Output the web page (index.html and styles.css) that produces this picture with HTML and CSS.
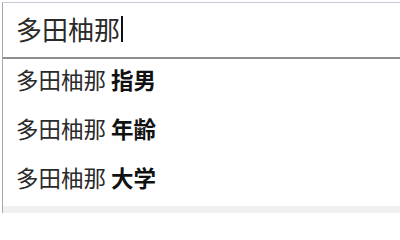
FILE: index.html
```html
<!DOCTYPE html>
<html lang="ja">
<head>
<meta charset="utf-8">
<link rel="stylesheet" href="styles.css">
</head>
<body>
<div class="combo">
  <div class="field"><span class="value">多田柚那</span><span class="caret"></span></div>
  <ul class="list">
    <li class="item">多田柚那 <b>指男</b></li>
    <li class="item">多田柚那 <b>年齢</b></li>
    <li class="item">多田柚那 <b>大学</b></li>
    <li class="item active"></li>
  </ul>
</div>
</body>
</html>
```
FILE: styles.css
```css
html, body {
  margin: 0;
  padding: 0;
  background: #ffffff;
  overflow: hidden;
  width: 400px;
  height: 213px;
}
.combo {
  margin: 2px 0 0 2px;
  width: 398px;
  font-family: "Noto Sans CJK JP", "Noto Sans", sans-serif;
}
.field {
  box-sizing: border-box;
  height: 57px;
  border-top: 1px solid #c6cad6;
  border-left: 1px solid #a8a8a8;
  border-bottom: 2px solid #8e8e8e;
  display: flex;
  align-items: center;
  padding-left: 13px;
  padding-bottom: 3px;
  font-size: 26px;
  color: #2a2a2a;
  line-height: 1;
}
.value {
  display: block;
}
.caret {
  display: block;
  width: 2px;
  height: 26px;
  margin-left: 1px;
  background: #111111;
}
.list {
  list-style: none;
  margin: 0;
  padding: 0;
  border-left: 1px solid #a8a8a8;
}
.item {
  box-sizing: border-box;
  height: 49px;
  display: flex;
  align-items: center;
  padding-left: 13px;
  padding-bottom: 8px;
  font-size: 22.5px;
  line-height: 1;
  color: #2a2a2a;
  white-space: pre;
}
.item b {
  font-weight: 700;
  color: #111111;
}
.item.active {
  height: 7px;
  padding: 0;
  background: #f0f0f0;
}
```
